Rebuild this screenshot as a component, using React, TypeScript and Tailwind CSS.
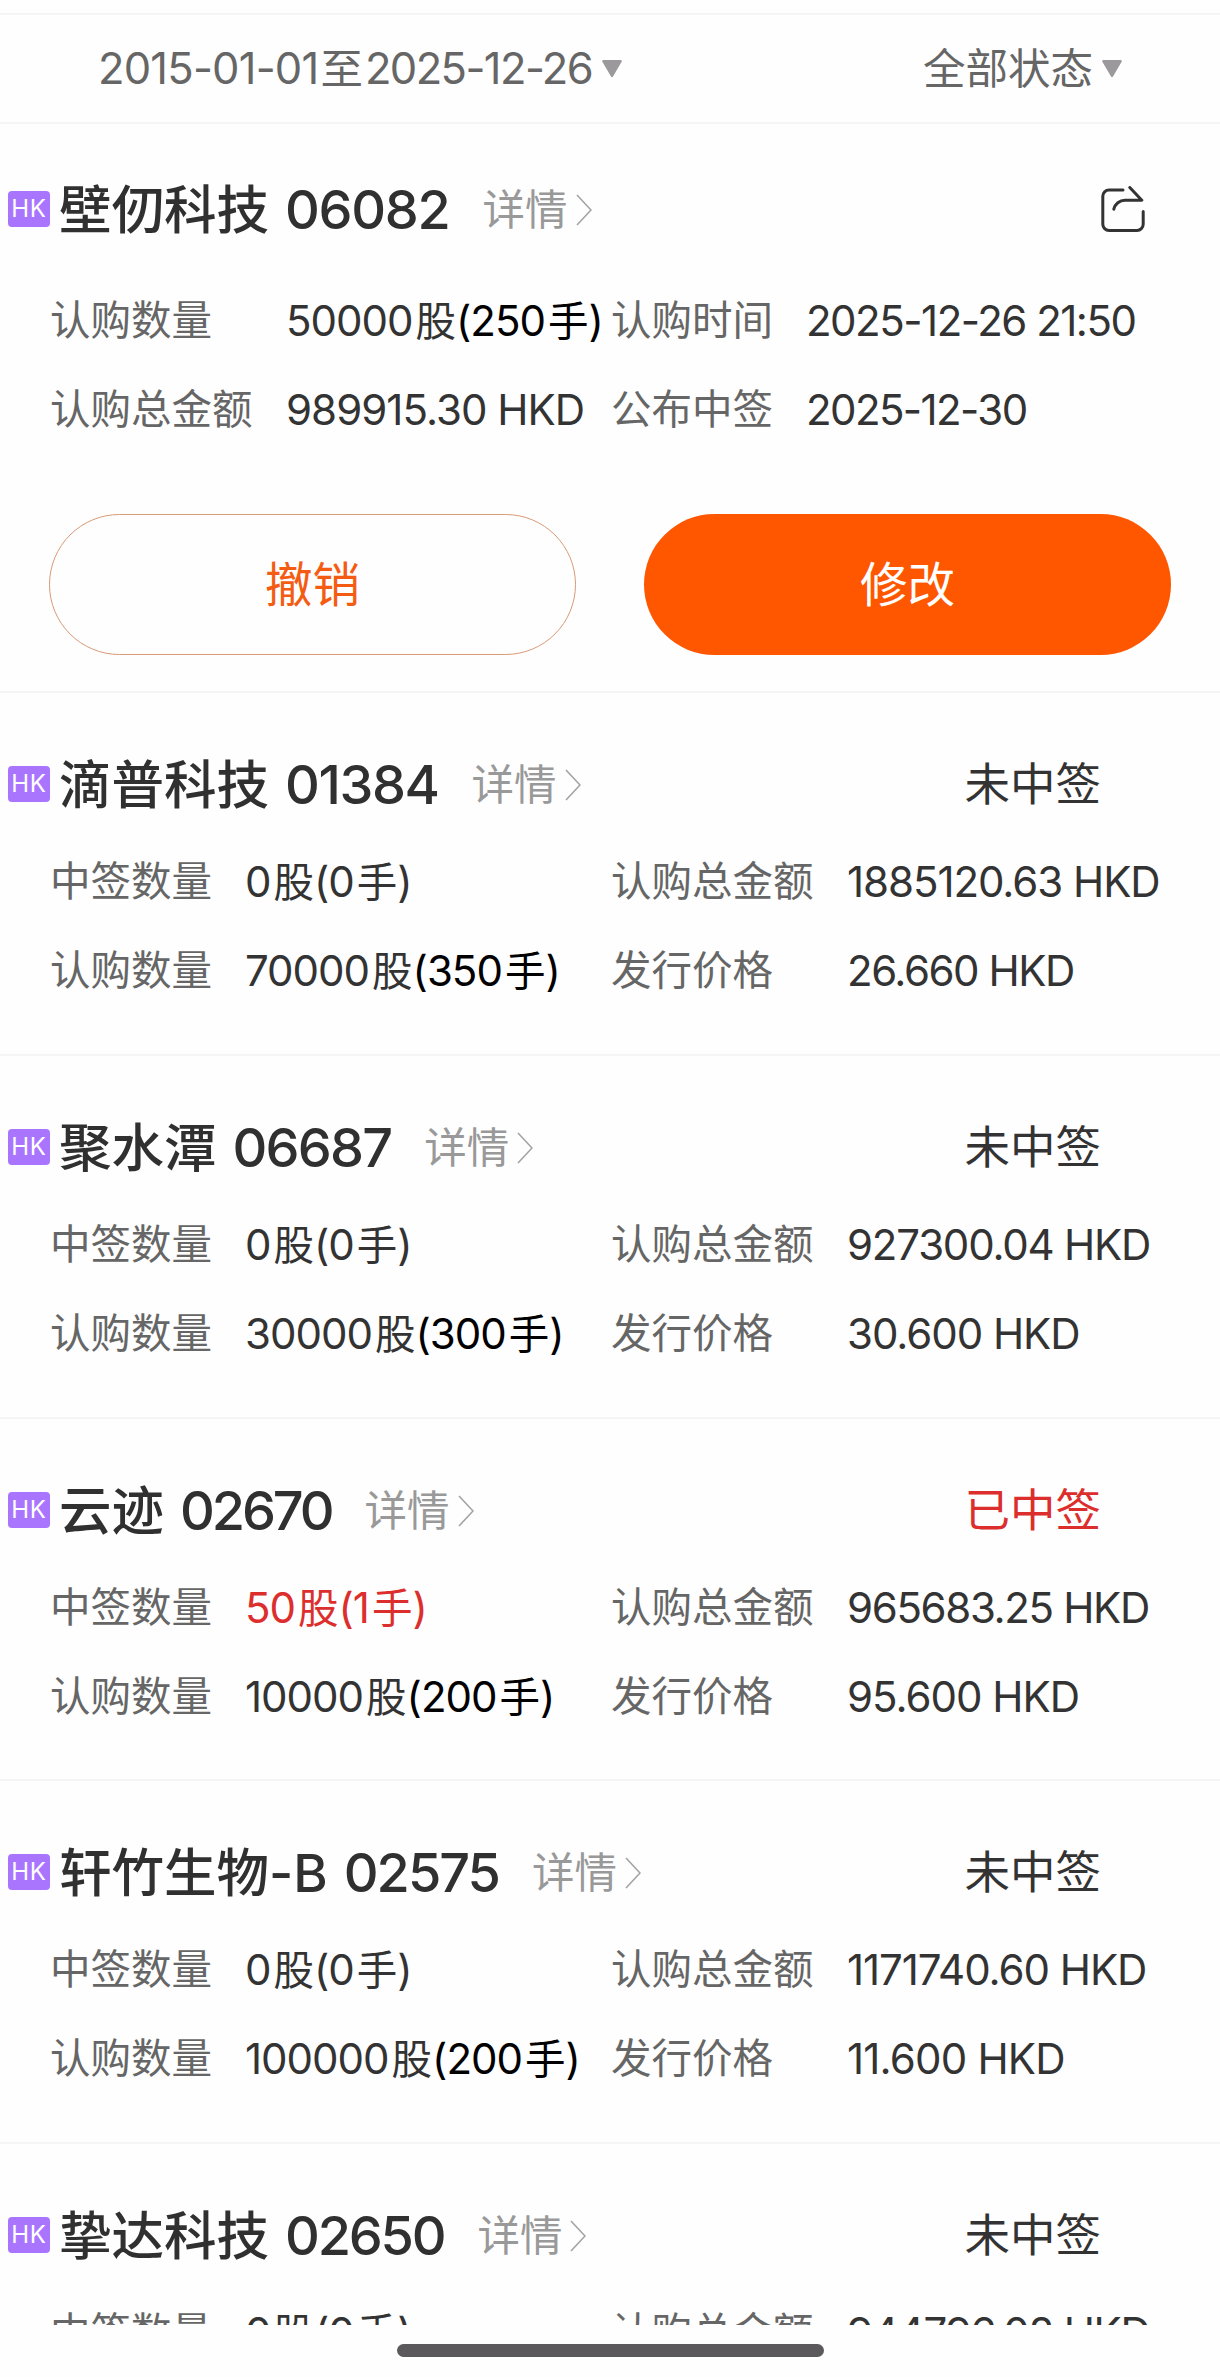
import React from 'react';

interface Subscription {
  name: string;
  code: string;
  codeClass: string;
  status: string;
  won: boolean;
  allotted: string;
  shares: string;
  lots: string;
  amount: string;
  amountClass: string;
  price: string;
  priceClass: string;
}

const subscriptions: Subscription[] = [
  { name: '滴普科技', code: '01384', codeClass: 'tracking-[-1.4px]', status: '未中签', won: false, allotted: '0股(0手)', shares: '70000股', lots: '(350手)', amount: '1885120.63 HKD', amountClass: 'tracking-[-1.05px]', price: '26.660 HKD', priceClass: 'tracking-[-1.45px]' },
  { name: '聚水潭', code: '06687', codeClass: 'tracking-[-1.8px]', status: '未中签', won: false, allotted: '0股(0手)', shares: '30000股', lots: '(300手)', amount: '927300.04 HKD', amountClass: 'tracking-[-1.2px]', price: '30.600 HKD', priceClass: 'tracking-[-1.05px]' },
  { name: '云迹', code: '02670', codeClass: 'tracking-[-3.1px]', status: '已中签', won: true, allotted: '50股(1手)', shares: '10000股', lots: '(200手)', amount: '965683.25 HKD', amountClass: 'tracking-[-1.35px]', price: '95.600 HKD', priceClass: 'tracking-[-1px]' },
  { name: '轩竹生物-B', code: '02575', codeClass: 'tracking-[-2px]', status: '未中签', won: false, allotted: '0股(0手)', shares: '100000股', lots: '(200手)', amount: '1171740.60 HKD', amountClass: 'tracking-[-1.05px]', price: '11.600 HKD', priceClass: 'tracking-[-0.8px]' },
  { name: '挚达科技', code: '02650', codeClass: 'tracking-[-2.2px]', status: '未中签', won: false, allotted: '0股(0手)', shares: '10000股', lots: '(200手)', amount: '944796.08 HKD', amountClass: 'tracking-[-1.3px]', price: '66.920 HKD', priceClass: 'tracking-[-1px]' },
];

const Triangle: React.FC = () => (
  <svg className="h-[18px] w-5" viewBox="0 0 20 18" fill="#9b999b">
    <path d="M1.5 0h17a1.2 1.2 0 0 1 1 2L11 16.6a1.2 1.2 0 0 1-2 0L.5 2a1.2 1.2 0 0 1 1-2z" />
  </svg>
);

const ShareIcon: React.FC = () => (
  <svg className="mb-0.5 h-[46px] w-11" viewBox="0 0 44 46" fill="none" stroke="#333333" strokeWidth="3" strokeLinecap="round" strokeLinejoin="round">
    <path d="M22 4H8a6.200 6.200 0 0 0-6.200 6.200v28a6.200 6.200 0 0 0 6.200 6.200h28a6.200 6.200 0 0 0 6.200-6.200V25.500" />
    <path d="M28.800 1.500 40.800 14.200H24a11.500 11.500 0 0 0-11.200 9" />
  </svg>
);

// digits run slightly larger than the 股 / 手 units next to them
const Quantity: React.FC<{ text: string; className?: string }> = ({ text, className }) => (
  <span className={className}>
    {text.split(/([股手])/).map((part, index) =>
      part === '股' || part === '手' ? (
        <span key={index} className="ml-[3px] text-[40.5px] tracking-normal">{part}</span>
      ) : (
        <span key={index} className="text-[42px] tracking-[-1px]">{part}</span>
      )
    )}
  </span>
);

const StockTitle: React.FC<{ name: string; code: string; codeClass: string }> = ({ name, code, codeClass }) => (
  <div className="flex items-center whitespace-nowrap">
    <div className="mb-0.5 flex h-9 w-[42px] items-center justify-center rounded-[4px] bg-[#a974fe] text-[24px] tracking-[0.8px] text-white">
      HK
    </div>
    <h2 className="ml-[9px] flex items-baseline text-[52.5px] leading-[72px] font-medium text-[#303030]">
      <span>{name}</span>
      <span className={`ml-4 text-[54px] ${codeClass}`}>{code}</span>
    </h2>
    <span className="ml-[33px] text-[42.5px] text-[#999999]">详情</span>
    <svg className="ml-2 h-8 w-4" viewBox="0 0 16 32" fill="none" stroke="#a3a3a3" strokeWidth="1.6">
      <path d="M1 1l14 15L1 31" />
    </svg>
  </div>
);

export default function App() {
  return (
    <div className="h-[2377px] w-[1220px] overflow-hidden bg-[#fefefe] font-['Inter','Noto_Sans_CJK_SC',sans-serif] text-[40.5px] leading-[60px] whitespace-nowrap text-[#333333]">
      <div className="h-[2325px] overflow-hidden">
        <div className="mt-[13px] flex h-[111px] items-center border-y-2 border-[#f5f5f5] text-[42.5px] text-[#666666]">
          <div className="flex w-[923px] items-center gap-2.5 pl-[98px]">
            <span className="flex items-baseline">
              <span className="text-[43.5px] tracking-[-0.8px]">2015-01-01</span>
              <span className="mx-0.5">至</span>
              <span className="text-[43.5px] tracking-[-1.6px]">2025-12-26</span>
            </span>
            <Triangle />
          </div>
          <div className="flex items-center gap-[9px]">
            <span>全部状态</span>
            <Triangle />
          </div>
        </div>

        <section className="h-[569px] border-b-2 border-[#f5f5f5] pt-[50px]">
          <div className="flex h-[72px] items-center justify-between pr-[75px] pl-2">
            <StockTitle name="壁仞科技" code="06082" codeClass="tracking-[-1.3px]" />
            <ShareIcon />
          </div>
          <div className="mt-[45px] grid h-[148px] grid-cols-[236px_325px_195px_1fr] gap-y-7 pl-[50px]">
            <span className="text-[#666666]">认购数量</span>
            <span>
              <Quantity text="50000股" />
              <Quantity text="(250手)" className="text-black" />
            </span>
            <span className="text-[#666666]">认购时间</span>
            <span className="text-[42px] tracking-[-1.5px]">2025-12-26 21:50</span>
            <span className="text-[#666666]">认购总金额</span>
            <span className="text-[42px] tracking-[-0.95px]">989915.30 HKD</span>
            <span className="text-[#666666]">公布中签</span>
            <span className="text-[42px] tracking-[-1.6px]">2025-12-30</span>
          </div>
          <div className="mt-[75px] flex gap-[68px] pl-[49px] text-[47.5px]">
            <button className="h-[141px] w-[527px] rounded-full border-[1.5px] border-[#d99a76] text-[#f45c14]">撤销</button>
            <button className="h-[141px] w-[527px] rounded-full bg-[#ff5600] text-white">修改</button>
          </div>
        </section>

        {subscriptions.map((item) => (
          <section key={item.code} className="h-[362.75px] border-b-2 border-[#f5f5f5] pt-[56px]">
            <div className="flex h-[72px] items-center justify-between pr-[119px] pl-2">
              <StockTitle name={item.name} code={item.code} codeClass={item.codeClass} />
              <span className={`text-[45.5px] ${item.won ? 'text-[#dc2f2d]' : ''}`}>{item.status}</span>
            </div>
            <div className="mt-[31px] grid h-[148px] grid-cols-[195px_366px_236px_1fr] gap-y-7 pl-[50px]">
              <span className="text-[#666666]">中签数量</span>
              <Quantity text={item.allotted} className={item.won ? 'text-[#dc2f2d]' : ''} />
              <span className="text-[#666666]">认购总金额</span>
              <span className={`text-[42px] ${item.amountClass}`}>{item.amount}</span>
              <span className="text-[#666666]">认购数量</span>
              <span>
                <Quantity text={item.shares} />
                <Quantity text={item.lots} className="text-black" />
              </span>
              <span className="text-[#666666]">发行价格</span>
              <span className={`text-[42px] ${item.priceClass}`}>{item.price}</span>
            </div>
          </section>
        ))}
      </div>
      <div className="mx-auto mt-[19px] h-[13px] w-[427px] rounded-full bg-[#5b595b]" />
    </div>
  );
}
